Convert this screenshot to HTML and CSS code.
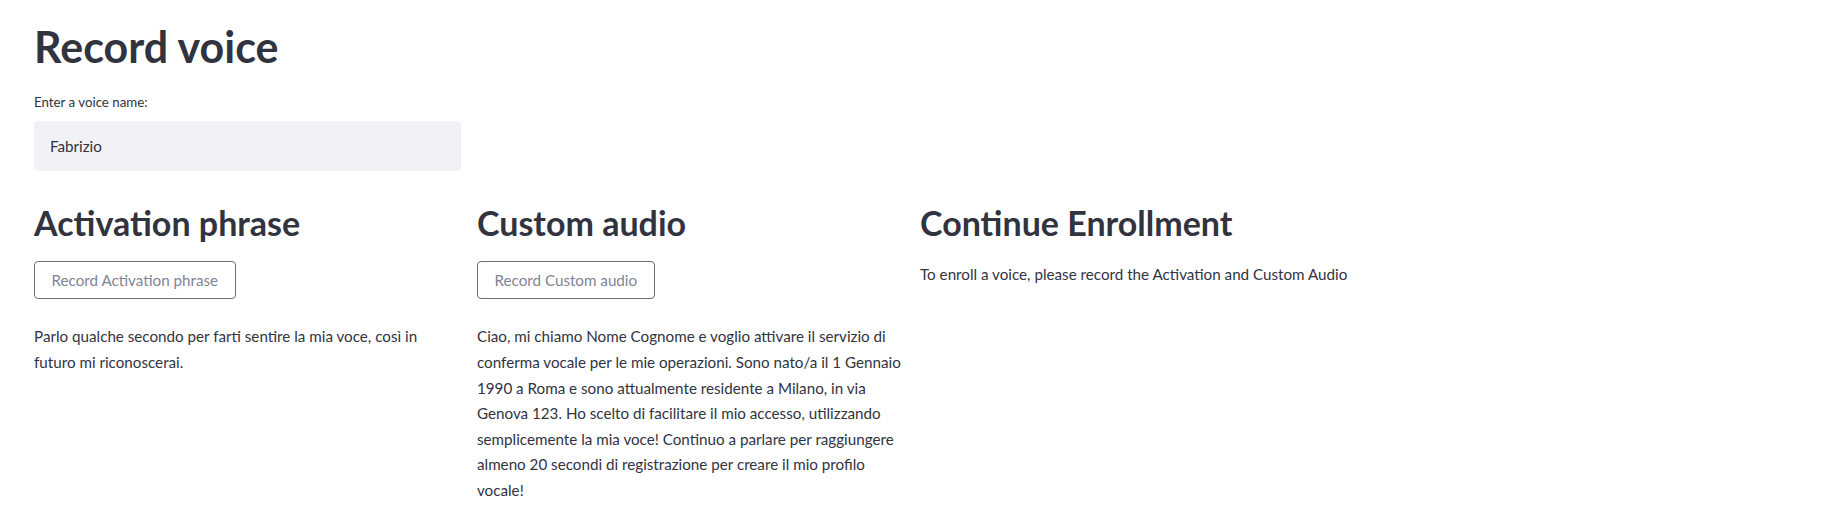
FILE: index.html
```html
<!DOCTYPE html>
<html lang="it">
<head>
<meta charset="utf-8">
<title>Record voice</title>
<link rel="stylesheet" href="styles.css">
</head>
<body>
<main class="app">
  <h1 class="title">Record voice</h1>
  <div class="field">
    <label class="field-label">Enter a voice name:</label>
    <div class="text-input">Fabrizio</div>
  </div>
  <div class="columns">
    <section class="col">
      <h2 class="col-heading">Activation phrase</h2>
      <button class="btn">Record Activation phrase</button>
      <p class="col-text">Parlo qualche secondo per farti sentire la mia voce, così in futuro mi riconoscerai.</p>
    </section>
    <section class="col">
      <h2 class="col-heading">Custom audio</h2>
      <button class="btn">Record Custom audio</button>
      <p class="col-text">Ciao, mi chiamo Nome Cognome e voglio attivare il servizio di conferma vocale per le mie operazioni. Sono nato/a il 1 Gennaio 1990 a Roma e sono attualmente residente a Milano, in via Genova 123. Ho scelto di facilitare il mio accesso, utilizzando semplicemente la mia voce! Continuo a parlare per raggiungere almeno 20 secondi di registrazione per creare il mio profilo vocale!</p>
    </section>
    <section class="col">
      <h2 class="col-heading">Continue Enrollment</h2>
      <p class="col-note">To enroll a voice, please record the Activation and Custom Audio</p>
    </section>
  </div>
</main>
</body>
</html>
```

FILE: styles.css
```css
* { box-sizing: border-box; }
html, body { margin: 0; padding: 0; background: #ffffff; }
body {
  font-family: Lato, "Source Sans Pro", "Noto Sans", sans-serif;
  color: #31333f;
  font-size: 15.2px;
}
.app {
  padding: 21px 35px 0 34px;
}
.title {
  margin: 0;
  font-size: 43px;
  line-height: 1.2;
  font-weight: 700;
}
.field {
  margin-top: 18px;
  width: 427px;
}
.field-label {
  display: block;
  font-size: 13.3px;
  line-height: 22px;
  margin-bottom: 8px;
}
.text-input {
  height: 50px;
  background: #f0f2f6;
  border-radius: 4px;
  padding: 0 16px;
  display: flex;
  align-items: center;
  font-size: 15.2px;
}
.columns {
  margin-top: 32px;
  display: grid;
  grid-template-columns: 427px 427px 1fr;
  column-gap: 16px;
}
.col { min-width: 0; }
.col-heading {
  margin: 0;
  font-size: 34px;
  line-height: 1.2;
  font-weight: 700;
}
.btn {
  display: inline-block;
  margin-top: 18px;
  height: 38px;
  padding: 0 16.5px;
  background: #ffffff;
  border: 1px solid #6b6d78;
  border-radius: 4px;
  color: #808495;
  font-family: inherit;
  font-size: 15.2px;
}
.col-text {
  margin: 25px 0 0;
  line-height: 25.6px;
}
.col-note {
  margin: 19px 0 0;
  line-height: 25.6px;
}
```
